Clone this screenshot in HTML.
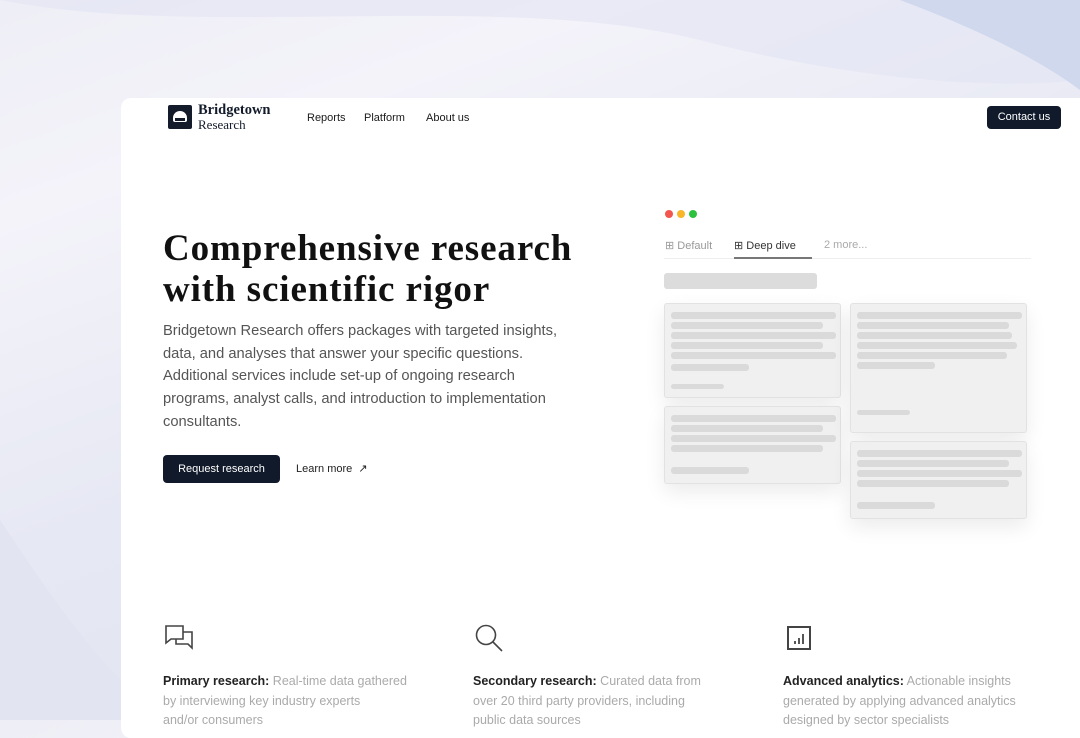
<!DOCTYPE html><html><head><style>
*{margin:0;padding:0;box-sizing:border-box}
body{width:1080px;height:720px;overflow:hidden;font-family:"Liberation Sans",sans-serif;background:linear-gradient(160deg,#eeeef6 0%,#f4f3fa 20%,#e6e8f3 50%,#dfe2f0 100%);position:relative}
.wave{position:absolute;left:0;top:0;width:1080px;height:720px}
.card{position:absolute;left:121px;top:98px;width:980px;height:640px;background:#fff;border-radius:10px}
.abs{position:absolute}
.nav a{position:absolute;top:112px;font-size:11px;color:#1a1a1a}
h1{position:absolute;left:163px;top:228px;font-family:"Liberation Serif",serif;font-size:37px;line-height:41px;font-weight:700;color:#111;letter-spacing:0.9px;white-space:nowrap}
.p{position:absolute;left:163px;top:320px;width:440px;font-size:14.7px;line-height:22.7px;color:#555;white-space:nowrap}
.btn{position:absolute;background:#111a2b;color:#fff;font-size:11px;border-radius:4px;text-align:center}
.sk{position:absolute;background:#f0f0f0;border:1px solid #e2e2e2;border-radius:3px;box-shadow:0 8px 20px rgba(0,0,0,.08)}
.l{position:absolute;height:7px;background:#dadada;border-radius:3px}
.f{position:absolute;top:672px;width:290px;font-size:12.5px;line-height:19.5px;color:#aaa;white-space:nowrap}
.f b{color:#222;font-weight:700}
</style></head><body>
<svg class="wave" viewBox="0 0 1080 720"><path d="M0 0 C200 40 500 -10 700 40 C850 80 1000 90 1080 80 L1080 0Z" fill="#e4e6f3" opacity=".7"/><path d="M900 0 C980 30 1040 60 1080 90 L1080 0Z" fill="#cfd8ec"/><path d="M0 520 C40 580 80 640 121 680 L121 720 L0 720Z" fill="#e2e4f1"/></svg>
<div class="card"></div>
<div class="abs" style="left:168px;top:105px;width:24px;height:24px;background:#141c2b;border-radius:2px"></div>
<div class="abs" style="left:173px;top:111px;width:14px;height:11px;background:#fff;border-radius:7px 7px 2px 2px"></div>
<div class="abs" style="left:175px;top:118px;width:10px;height:3px;background:#141c2b"></div>
<div class="abs" style="left:198px;top:104px;font-family:'Liberation Serif',serif;font-size:14.5px;font-weight:700;color:#141c2b;line-height:13px">Bridgetown</div>
<div class="abs" style="left:198px;top:118px;font-family:'Liberation Serif',serif;font-size:13px;color:#141c2b;line-height:13px">Research</div>
<div class="nav"><a style="left:307px">Reports</a><a style="left:364px">Platform</a><a style="left:426px">About us</a></div>
<div class="btn" style="left:987px;top:106px;width:74px;height:23px;line-height:23px">Contact us</div>
<h1>Comprehensive research<br>with scientific rigor</h1>
<div class="p">Bridgetown Research offers packages with targeted insights,<br>data, and analyses that answer your specific questions.<br>Additional services include set-up of ongoing research<br>programs, analyst calls, and introduction to implementation<br>consultants.</div>
<div class="btn" style="left:163px;top:455px;width:117px;height:28px;line-height:28px">Request research</div>
<div class="abs" style="left:296px;top:462px;font-size:11px;color:#222">Learn more &nbsp;↗</div>
<div class="abs" style="left:665px;top:210px;width:8px;height:8px;border-radius:50%;background:#f2564e"></div>
<div class="abs" style="left:677px;top:210px;width:8px;height:8px;border-radius:50%;background:#f8b628"></div>
<div class="abs" style="left:689px;top:210px;width:8px;height:8px;border-radius:50%;background:#2cc13f"></div>
<div class="abs" style="left:665px;top:239px;font-size:11px;color:#999">⊞ Default</div>
<div class="abs" style="left:734px;top:239px;font-size:11px;color:#333">⊞ Deep dive</div>
<div class="abs" style="left:824px;top:239px;font-size:11px;color:#aaa">2 more...</div>
<div class="abs" style="left:664px;top:258px;width:367px;height:1px;background:#eee"></div>
<div class="abs" style="left:734px;top:257px;width:78px;height:2px;background:#777"></div>
<div class="abs" style="left:664px;top:273px;width:153px;height:16px;background:#dcdcdc;border-radius:3px"></div>
<div class="sk" style="left:664px;top:303px;width:177px;height:95px"><div class="l" style="left:6px;top:8px;width:165px"></div><div class="l" style="left:6px;top:18px;width:152px"></div><div class="l" style="left:6px;top:28px;width:165px"></div><div class="l" style="left:6px;top:38px;width:152px"></div><div class="l" style="left:6px;top:48px;width:165px"></div><div class="l" style="left:6px;top:60px;width:78px"></div><div class="l" style="left:6px;top:80px;width:53px;height:5px"></div></div>
<div class="sk" style="left:664px;top:406px;width:177px;height:78px"><div class="l" style="left:6px;top:8px;width:165px"></div><div class="l" style="left:6px;top:18px;width:152px"></div><div class="l" style="left:6px;top:28px;width:165px"></div><div class="l" style="left:6px;top:38px;width:152px"></div><div class="l" style="left:6px;top:60px;width:78px"></div></div>
<div class="sk" style="left:850px;top:303px;width:177px;height:130px"><div class="l" style="left:6px;top:8px;width:165px"></div><div class="l" style="left:6px;top:18px;width:152px"></div><div class="l" style="left:6px;top:28px;width:155px"></div><div class="l" style="left:6px;top:38px;width:160px"></div><div class="l" style="left:6px;top:48px;width:150px"></div><div class="l" style="left:6px;top:58px;width:78px"></div><div class="l" style="left:6px;top:106px;width:53px;height:5px"></div></div>
<div class="sk" style="left:850px;top:441px;width:177px;height:78px"><div class="l" style="left:6px;top:8px;width:165px"></div><div class="l" style="left:6px;top:18px;width:152px"></div><div class="l" style="left:6px;top:28px;width:165px"></div><div class="l" style="left:6px;top:38px;width:152px"></div><div class="l" style="left:6px;top:60px;width:78px"></div></div>
<svg class="abs" style="left:164px;top:624px" width="30" height="28" viewBox="0 0 30 28" fill="none" stroke="#444" stroke-width="1.6"><path d="M2 2h17v13H7l-5 4z"/><path d="M12 15v5h12l4 4V8h-9"/></svg>
<svg class="abs" style="left:474px;top:623px" width="30" height="30" viewBox="0 0 30 30" fill="none" stroke="#444" stroke-width="1.6"><circle cx="12" cy="12" r="9.5"/><path d="M19 19l9 9"/></svg>
<svg class="abs" style="left:786px;top:625px" width="26" height="26" viewBox="0 0 26 26" fill="none" stroke="#444" stroke-width="2"><rect x="2" y="2" width="22" height="22"/><path d="M9 19v-3M13 19v-6M17 19v-10" stroke-width="1.8"/></svg>
<div class="f" style="left:163px"><b>Primary research:</b> Real-time data gathered<br>by interviewing key industry experts<br>and/or consumers</div>
<div class="f" style="left:473px"><b>Secondary research:</b> Curated data from<br>over 20 third party providers, including<br>public data sources</div>
<div class="f" style="left:783px"><b>Advanced analytics:</b> Actionable insights<br>generated by applying advanced analytics<br>designed by sector specialists</div>
</body></html>
